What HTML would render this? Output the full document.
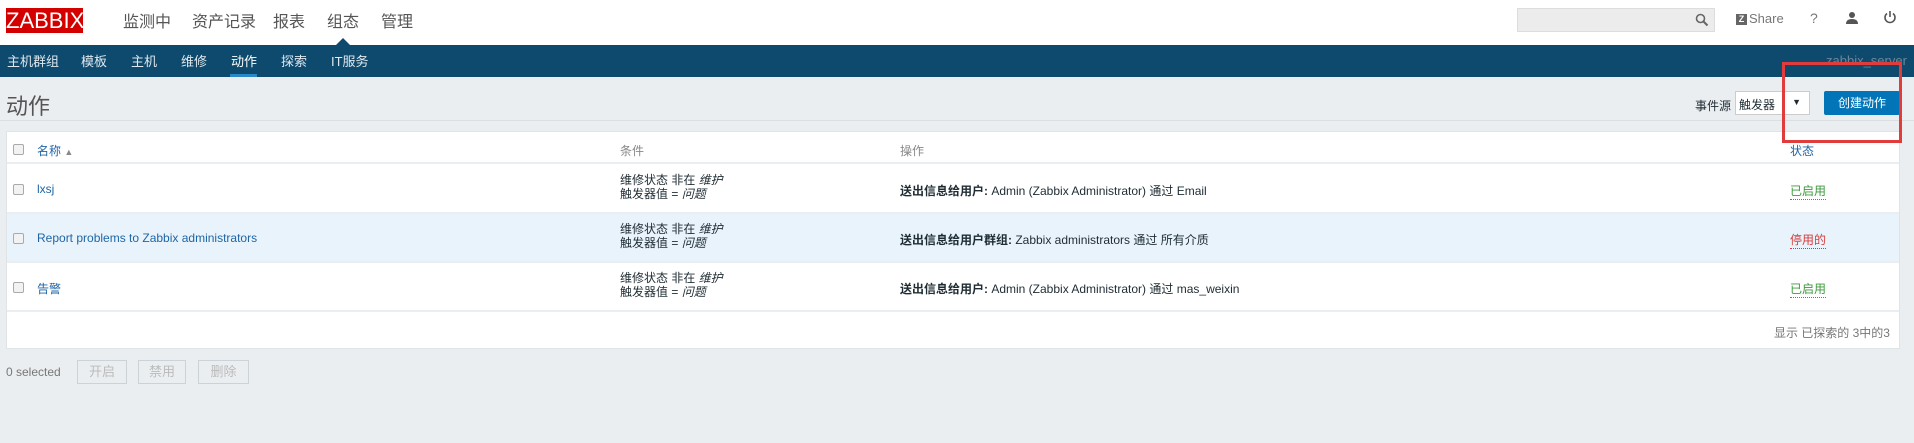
<!DOCTYPE html>
<html><head><meta charset="utf-8"><style>
*{box-sizing:border-box;margin:0;padding:0}
body{width:1914px;height:443px;overflow:hidden;background:#ebeef0;font-family:"Liberation Sans","Noto Sans CJK SC",sans-serif;font-size:12px;color:#1f2c33;position:relative}
.abs{position:absolute;white-space:nowrap}
.top{position:absolute;left:0;top:0;width:1914px;height:45px;background:#fff}
.nav{position:absolute;left:0;top:45px;width:1914px;height:32px;background:#0e4a6e}
.logo{left:6px;top:8px;width:77px;height:25px;background:#d40000;color:#fff;font-size:22px;line-height:25px;text-align:center}
.m{top:8px;font-size:16px;color:#555}
.s{top:51px;font-size:13px;color:#dfe8ee}
.table{position:absolute;left:6px;top:131px;width:1894px;height:218px;background:#fff;border:1px solid #dfe4e7}
.row{position:absolute;left:0;width:100%;border-bottom:2px solid #ebeef0}
.cb{position:absolute;left:6px;width:11px;height:11px;border:1px solid #aaa;border-radius:2px;background:#f2f2f2}
.lnk{color:#1f65a6}
.cond{line-height:14px}
.btn{top:360px;height:24px;border:1px solid #ccd3d6;color:#bbb;font-size:13px;line-height:22px;text-align:center}
</style></head><body>
<div class="top"></div>
<div class="abs logo">ZABBIX</div>
<div class="abs m" style="left:123px">监测中</div>
<div class="abs m" style="left:192px">资产记录</div>
<div class="abs m" style="left:273px">报表</div>
<div class="abs m" style="left:327px">组态</div>
<div class="abs m" style="left:381px">管理</div>
<div class="abs" style="left:336px;top:38px;width:0;height:0;border-left:7px solid transparent;border-right:7px solid transparent;border-bottom:7px solid #0e4a6e"></div>
<div class="abs" style="left:1517px;top:8px;width:198px;height:24px;background:#ececec;border:1px solid #ddd"></div>
<svg class="abs" style="left:1695px;top:13px" width="14" height="14"><circle cx="5.5" cy="5.5" r="4" fill="none" stroke="#666" stroke-width="1.6"/><line x1="8.5" y1="8.5" x2="12.5" y2="12.5" stroke="#666" stroke-width="2"/></svg>
<div class="abs" style="left:1736px;top:14px;width:11px;height:11px;background:#666;color:#fff;font-size:9px;font-weight:bold;line-height:11px;text-align:center">Z</div>
<div class="abs" style="left:1749px;top:11px;font-size:13px;color:#777">Share</div>
<div class="abs" style="left:1810px;top:10px;font-size:14px;color:#777">?</div>
<svg class="abs" style="left:1845px;top:11px" width="14" height="14"><circle cx="7" cy="4" r="3" fill="#555"/><path d="M1 13 Q1 8 7 8 Q13 8 13 13Z" fill="#555"/></svg>
<svg class="abs" style="left:1883px;top:10px" width="14" height="14"><path d="M4 3.5 A5 5 0 1 0 10 3.5" fill="none" stroke="#555" stroke-width="1.6"/><line x1="7" y1="1" x2="7" y2="7" stroke="#555" stroke-width="1.6"/></svg>
<div class="nav"></div>
<div class="abs s" style="left:7px">主机群组</div>
<div class="abs s" style="left:81px">模板</div>
<div class="abs s" style="left:131px">主机</div>
<div class="abs s" style="left:181px">维修</div>
<div class="abs s" style="left:231px;color:#fff">动作</div>
<div class="abs" style="left:230px;top:74px;width:27px;height:3px;background:#2a88c8"></div>
<div class="abs s" style="left:281px">探索</div>
<div class="abs s" style="left:331px">IT服务</div>
<div class="abs" style="left:1826px;top:53px;color:#6b8799;font-size:13px">zabbix_server</div>
<div class="abs" style="left:6px;top:89px;font-size:22px;color:#555">动作</div>
<div class="abs" style="left:0;top:120px;width:1914px;height:1px;background:#dcdfe1"></div>
<div class="abs" style="left:1695px;top:97px">事件源</div>
<div class="abs" style="left:1735px;top:91px;width:75px;height:24px;background:#fff;border:1px solid #ccc;padding:4px 3px">触发器<span style="position:absolute;right:8px;top:5px;font-size:9px">▼</span></div>
<div class="abs" style="left:1824px;top:91px;width:76px;height:24px;background:#0275b8;color:#fff;border-radius:2px;line-height:24px;text-align:center">创建动作</div>
<div class="table">
<div class="row" style="top:0;height:32px"></div>
<div class="cb" style="top:12px"></div>
<div class="abs lnk" style="left:30px;top:10px">名称 <span style="font-size:9px;color:#888">▲</span></div>
<div class="abs" style="left:613px;top:10px;color:#888">条件</div>
<div class="abs" style="left:893px;top:10px;color:#888">操作</div>
<div class="abs lnk" style="left:1783px;top:10px">状态</div>

<div class="row" style="top:32px;height:50px"></div>
<div class="cb" style="top:52px"></div>
<div class="abs lnk" style="left:30px;top:50px">lxsj</div>
<div class="abs cond" style="left:613px;top:41px">维修状态 非在 <i>维护</i><br>触发器值 = <i>问题</i></div>
<div class="abs" style="left:893px;top:50px"><b>送出信息给用户:</b> Admin (Zabbix Administrator) 通过 Email</div>
<div class="abs" style="left:1783px;top:50px;color:#3d9a3d;border-bottom:1px dotted #3d9a3d">已启用</div>

<div class="row" style="top:82px;height:49px;background:#e9f3fb"></div>
<div class="cb" style="top:101px"></div>
<div class="abs lnk" style="left:30px;top:99px">Report problems to Zabbix administrators</div>
<div class="abs cond" style="left:613px;top:90px">维修状态 非在 <i>维护</i><br>触发器值 = <i>问题</i></div>
<div class="abs" style="left:893px;top:99px"><b>送出信息给用户群组:</b> Zabbix administrators 通过 所有介质</div>
<div class="abs" style="left:1783px;top:99px;color:#d43c3c;border-bottom:1px dotted #d43c3c">停用的</div>

<div class="row" style="top:131px;height:49px"></div>
<div class="cb" style="top:150px"></div>
<div class="abs lnk" style="left:30px;top:148px">告警</div>
<div class="abs cond" style="left:613px;top:139px">维修状态 非在 <i>维护</i><br>触发器值 = <i>问题</i></div>
<div class="abs" style="left:893px;top:148px"><b>送出信息给用户:</b> Admin (Zabbix Administrator) 通过 mas_weixin</div>
<div class="abs" style="left:1783px;top:148px;color:#3d9a3d;border-bottom:1px dotted #3d9a3d">已启用</div>

<div class="abs" style="right:9px;top:192px;color:#777">显示 已探索的 3中的3</div>
</div>
<div class="abs" style="left:6px;top:365px;color:#777">0 selected</div>
<div class="abs btn" style="left:77px;width:50px">开启</div>
<div class="abs btn" style="left:138px;width:48px">禁用</div>
<div class="abs btn" style="left:198px;width:51px">删除</div>
<div class="abs" style="left:1782px;top:62px;width:120px;height:81px;border:3px solid #e03c3c"></div>
</body></html>
